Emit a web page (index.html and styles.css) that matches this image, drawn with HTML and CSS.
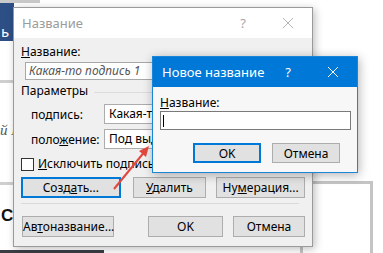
FILE: index.html
```html
<!DOCTYPE html>
<html lang="ru">
<head>
  <meta charset="UTF-8">
  <title>Название</title>
  <link rel="stylesheet" href="styles.css">
</head>
<body>

<div class="desk">
  <!-- документ Word на заднем плане -->
  <div class="doc-top"></div>
  <div class="doc-tab">ь</div>
  <div class="doc-rule rule-1"></div>
  <div class="doc-text text-1">й I</div>
  <div class="doc-rule rule-2"></div>
  <div class="doc-text text-2">С</div>
  <div class="doc-bar"></div>
  <div class="doc-page"></div>

  <!-- окно "Название" -->
  <div class="dialog main-dialog">
    <div class="titlebar">
      <span class="title">Название</span>
      <span class="tb-help">?</span>
      <svg class="tb-close" width="12" height="12" viewBox="0 0 12 12"><path d="M1 1L11 11M11 1L1 11" stroke="#b5b5b5" stroke-width="1" fill="none"/></svg>
    </div>
    <div class="body">
      <div class="label"><u>Н</u>азвание:</div>
      <div class="field caption-field">Какая-то подпись 1</div>

      <div class="group-title"><span>Параметры</span><i></i></div>

      <div class="param-row">
        <span class="param-label">по<u>д</u>пись:</span>
        <div class="select">Какая-то подпись</div>
      </div>
      <div class="param-row">
        <span class="param-label">поло<u>ж</u>ение:</span>
        <div class="select">Под выделенным объектом</div>
      </div>

      <div class="check-row">
        <span class="checkbox"></span>
        <span class="check-text"><u>И</u>сключить подпись из названия</span>
      </div>

      <div class="btn-row">
        <button class="btn focused w-create">Созд<u>а</u>ть...</button>
        <button class="btn w-delete"><u>У</u>далить</button>
        <button class="btn w-number">Ну<u>м</u>ерация...</button>
      </div>

      <div class="separator"></div>

      <div class="btn-row bottom-row">
        <button class="btn w-auto">Ав<u>т</u>оназвание...</button>
        <button class="btn w-ok">OK</button>
        <button class="btn w-cancel">Отмена</button>
      </div>
    </div>
  </div>

  <!-- окно "Новое название" -->
  <div class="dialog new-dialog">
    <div class="titlebar active">
      <span class="title">Новое название</span>
      <span class="tb-help">?</span>
      <svg class="tb-close" width="12" height="12" viewBox="0 0 12 12"><path d="M1 1L11 11M11 1L1 11" stroke="#ffffff" stroke-width="1" fill="none"/></svg>
    </div>
    <div class="body">
      <div class="label"><u>Н</u>азвание:</div>
      <div class="field new-field"><span class="cursor"></span></div>
      <div class="btn-row new-buttons">
        <button class="btn focused w-small">OK</button>
        <button class="btn w-small">Отмена</button>
      </div>
    </div>
  </div>

  <svg class="arrow" width="383" height="253" viewBox="0 0 383 253">
    <path d="M114 189L146 150" stroke="#e2453c" stroke-width="2" fill="none"/>
    <path d="M149 146L139 151L146 157Z" fill="#e2453c"/>
  </svg>
</div>

</body>
</html>
```

FILE: styles.css
```css
* {
  box-sizing: border-box;
}
body {
  margin: 0;
  font-family: "Noto Sans", "DejaVu Sans", sans-serif;
  font-size: 12px;
  color: #000;
  background-color: #fff;
}
.desk {
  position: relative;
  width: 383px;
  height: 253px;
  overflow: hidden;
  background-color: #fff;
}

/* задний план */
.doc-top {
  position: absolute;
  left: 0;
  top: 0;
  width: 40px;
  height: 3px;
  background-color: #c9c9c9;
}
.doc-tab {
  position: absolute;
  left: 0;
  top: 3px;
  width: 14px;
  height: 38px;
  background-color: #2d4f86;
  color: #fff;
  font-size: 15px;
  line-height: 56px;
  padding-left: 1px;
}
.doc-rule {
  position: absolute;
  left: 0;
  width: 20px;
  height: 3px;
  background-color: #cfcfcf;
}
.rule-1 { top: 80px; }
.rule-2 { top: 182px; }
.doc-text {
  position: absolute;
  left: 0;
  font-family: "Liberation Serif", serif;
}
.text-1 {
  top: 122px;
  font-style: italic;
  font-size: 15px;
  color: #555;
}
.text-2 {
  top: 206px;
  left: 1px;
  font-family: "Liberation Sans", sans-serif;
  font-weight: bold;
  font-size: 17px;
  color: #111;
}
.doc-bar {
  position: absolute;
  left: 0;
  top: 250px;
  width: 104px;
  height: 3px;
  background-color: #3a3d44;
}
.doc-page {
  position: absolute;
  left: 300px;
  top: 181px;
  width: 73px;
  height: 90px;
  border: 3px solid #c4c4c4;
}

/* окна */
.dialog {
  position: absolute;
  display: flex;
  flex-direction: column;
  background-color: #f0f0f0;
}
.main-dialog {
  left: 13px;
  top: 7px;
  width: 300px;
  height: 240px;
  border: 1px solid #9a9a9a;
  box-shadow: 2px 2px 8px rgba(0, 0, 0, 0.25);
}
.new-dialog {
  left: 152px;
  top: 56px;
  width: 206px;
  height: 117px;
  border: 1px solid #1a86d8;
  background-color: #f7f7f7;
  box-shadow: 1px 2px 10px rgba(0, 0, 0, 0.3);
}
.titlebar {
  display: flex;
  align-items: center;
  height: 30px;
  flex-shrink: 0;
  padding-left: 8px;
  background-color: #fff;
  color: #9b9b9b;
}
.titlebar.active {
  background-color: #0078d7;
  color: #fff;
  padding-left: 9px;
}
.title {
  flex: 1;
  font-size: 13px;
}
.tb-help {
  font-size: 13px;
  width: 30px;
  text-align: center;
}
.main-dialog .tb-help {
  color: #a5a5a5;
}
.tb-close {
  margin: 0 18px 0 24px;
}
.body {
  flex: 1;
  padding: 6px 7px 0 7px;
}
.new-dialog .body {
  padding: 8px 6px 0 7px;
}
.label {
  line-height: 16px;
}
u {
  text-decoration: underline;
  text-underline-offset: 1px;
}
.field {
  height: 18px;
  background-color: #fff;
  border: 1px solid #7a7a7a;
  line-height: 16px;
  padding-left: 3px;
  white-space: nowrap;
  overflow: hidden;
}
.caption-field {
  margin: 2px 0 0 4px;
  width: 135px;
  font-style: italic;
  color: #555;
  border-color: #a8a8a8;
  border-right: none;
}
.group-title {
  display: flex;
  align-items: center;
  margin-top: 3px;
  line-height: 16px;
}
.group-title i {
  flex: 1;
  height: 1px;
  margin: 2px 0 0 6px;
  background-color: #dcdcdc;
}
.param-row {
  display: flex;
  align-items: center;
  margin-top: 5px;
  padding-left: 10px;
}
.param-row + .param-row {
  margin-top: 5px;
}
.param-label {
  width: 73px;
}
.select {
  width: 55px;
  height: 20px;
  line-height: 18px;
  padding-left: 4px;
  background-color: #fff;
  border: 1px solid #acacac;
  border-right: none;
  white-space: nowrap;
  overflow: hidden;
}
.check-row {
  display: flex;
  align-items: center;
  gap: 4px;
  margin-top: 8px;
  line-height: 14px;
}
.check-text {
  width: 115px;
  white-space: nowrap;
  overflow: hidden;
}
.checkbox {
  width: 13px;
  height: 13px;
  background-color: #fff;
  border: 1px solid #333;
}
.btn-row {
  display: flex;
  margin-top: 6px;
}
.btn {
  height: 21px;
  padding: 0;
  font-family: inherit;
  font-size: inherit;
  color: #000;
  background-color: #e1e1e1;
  border: 1px solid #adadad;
  white-space: nowrap;
}
.btn.focused {
  border: 2px solid #0078d7;
}
.w-create { width: 100px; margin-right: 12px; }
.w-delete { width: 74px; margin-right: 10px; }
.w-number { width: 89px; }
.separator {
  height: 1px;
  margin: 5px 6px 0 0;
  background-color: #dadada;
}
.bottom-row {
  margin-top: 12px;
}
.w-auto { width: 92px; margin: 0 34px 0 1px; }
.w-ok { width: 75px; margin-right: 10px; }
.w-cancel { width: 72px; }

.new-field {
  height: 19px;
  margin-top: 0;
  width: 191px;
  position: relative;
}
.cursor {
  position: absolute;
  left: 2px;
  top: 3px;
  width: 1px;
  height: 12px;
  background-color: #000;
}
.new-buttons {
  margin-top: 13px;
  padding-left: 33px;
}
.w-small {
  width: 74px;
  height: 20px;
  margin-right: 11px;
}

.arrow {
  position: absolute;
  left: 0;
  top: 0;
  pointer-events: none;
}
```
